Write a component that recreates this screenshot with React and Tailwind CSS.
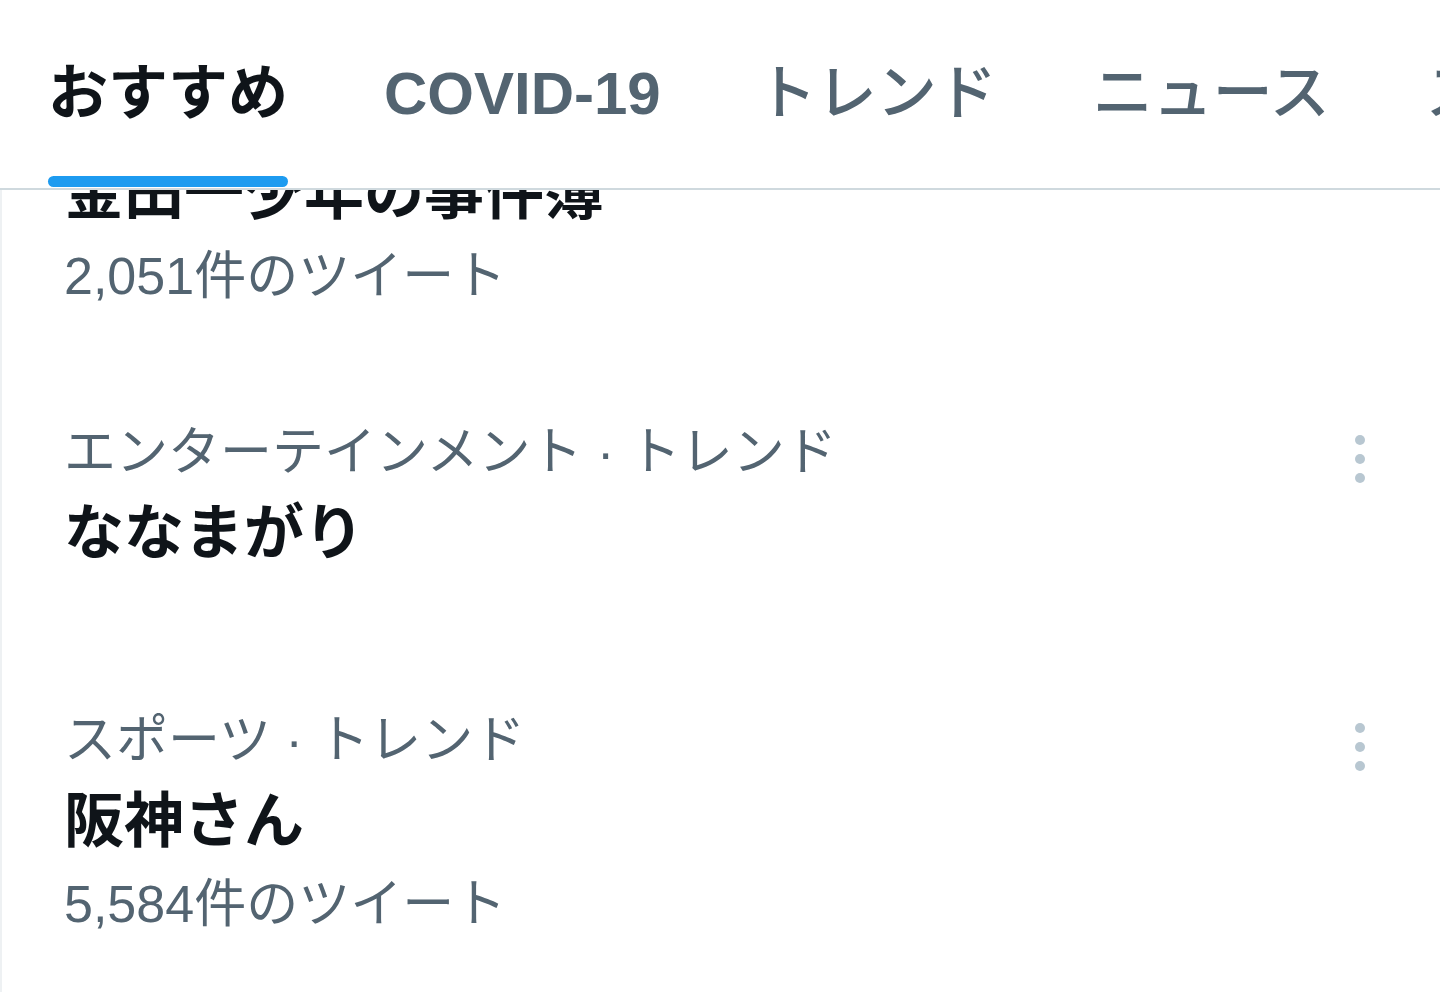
import React from "react";

const tabs = [
  { label: "おすすめ", active: true },
  { label: "COVID-19", latin: true },
  { label: "トレンド" },
  { label: "ニュース" },
  { label: "スポーツ" },
];

const trends = [
  { title: "金田一少年の事件簿", count: "2,051件のツイート", pad: "pt-[47px] pb-[47px]" },
  { category: "エンターテインメント · トレンド", title: "ななまがり", pad: "pt-[47px] pb-[77px]" },
  { category: "スポーツ · トレンド", title: "阪神さん", count: "5,584件のツイート", pad: "pt-[47px] pb-[47px]" },
];

function MoreDots() {
  return (
    <svg width="10" height="48" viewBox="0 0 10 48" className="text-[#b8c7d1]" fill="currentColor">
      <circle cx="5" cy="5" r="5" />
      <circle cx="5" cy="24" r="5" />
      <circle cx="5" cy="43" r="5" />
    </svg>
  );
}

export default function App() {
  return (
    <div
      className="w-[1440px] h-[999px] bg-white overflow-hidden"
      style={{ fontFamily: '"Liberation Sans", "Noto Sans CJK JP", sans-serif' }}
    >
      <header className="relative z-10 bg-white h-[190px] border-b-2 border-[#cfd9de] flex gap-[96px] pl-[48px] whitespace-nowrap">
        {tabs.map((t) => (
          <div key={t.label} className="flex flex-col">
            <div
              className={`h-[176px] pt-[12px] flex items-center text-[60px] leading-none ${
                t.latin ? "font-bold" : t.active ? "font-semibold" : "font-medium"
              } ${t.active ? "text-[#0f1419]" : "text-[#536471]"}`}
            >
              {t.label}
            </div>
            <div className={`h-[11px] rounded-full ${t.active ? "bg-[#1d9bf0]" : "bg-transparent"}`} />
          </div>
        ))}
      </header>

      <div className="-mt-[84px] border-l-2 border-[#eef1f3]">
        {trends.map((t) => (
          <div key={t.title} className={`flex pl-[62px] pr-[75px] ${t.pad}`}>
            <div className="flex-1 flex flex-col">
              {t.category && (
                <div className="text-[52px] leading-[82px] text-[#536471]">{t.category}</div>
              )}
              <div className="text-[60px] leading-[82px] font-semibold text-[#0f1419]">{t.title}</div>
              {t.count && (
                <div className="text-[52px] leading-[82px] text-[#536471]">{t.count}</div>
              )}
            </div>
            {t.category && (
              <div className="pt-[24px]">
                <MoreDots />
              </div>
            )}
          </div>
        ))}
      </div>
    </div>
  );
}
